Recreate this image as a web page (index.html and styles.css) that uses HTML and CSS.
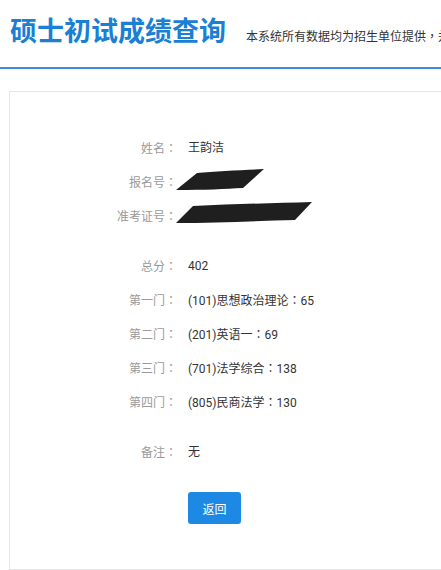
FILE: index.html
```html
<!DOCTYPE html>
<html lang="zh-CN">
<head>
<meta charset="utf-8">
<title>硕士初试成绩查询</title>
<link rel="stylesheet" href="styles.css">
</head>
<body>
<div class="page">
  <header class="header">
    <h1 class="title">硕士初试成绩查询</h1>
    <span class="subtitle">本系统所有数据均为招生单位提供<span class="colon" lang="zh-TW">，</span>并以招生单位公布的成绩为准。</span>
  </header>
  <main class="card">
    <section class="group">
      <div class="row"><span class="label">姓名<span class="colon" lang="zh-TW">：</span></span><span class="value">王韵洁</span></div>
      <div class="row"><span class="label">报名号<span class="colon" lang="zh-TW">：</span></span><span class="value value-redact">
        <svg class="redact redact-a" width="90" height="22" viewBox="0 0 90 22"><path d="M1 21 L22 4 C40 2 70 1 89 0 L68 19 C50 20 30 21 1 21 Z" fill="#1f1f1f"/></svg>
      </span></div>
      <div class="row"><span class="label">准考证号<span class="colon" lang="zh-TW">：</span></span><span class="value value-redact">
        <svg class="redact redact-b" width="138" height="22" viewBox="0 0 138 22"><path d="M1 21 L18 4 C60 2 100 1 137 0 L120 18 C80 19 40 21 1 21 Z" fill="#1f1f1f"/></svg>
      </span></div>
    </section>
    <section class="group">
      <div class="row"><span class="label">总分<span class="colon" lang="zh-TW">：</span></span><span class="value">402</span></div>
      <div class="row"><span class="label">第一门<span class="colon" lang="zh-TW">：</span></span><span class="value">(101)思想政治理论<span class="colon" lang="zh-TW">：</span>65</span></div>
      <div class="row"><span class="label">第二门<span class="colon" lang="zh-TW">：</span></span><span class="value">(201)英语一<span class="colon" lang="zh-TW">：</span>69</span></div>
      <div class="row"><span class="label">第三门<span class="colon" lang="zh-TW">：</span></span><span class="value">(701)法学综合<span class="colon" lang="zh-TW">：</span>138</span></div>
      <div class="row"><span class="label">第四门<span class="colon" lang="zh-TW">：</span></span><span class="value">(805)民商法学<span class="colon" lang="zh-TW">：</span>130</span></div>
    </section>
    <section class="group">
      <div class="row"><span class="label">备注<span class="colon" lang="zh-TW">：</span></span><span class="value">无</span></div>
    </section>
    <div class="actions">
      <button class="btn" type="button">返回</button>
    </div>
  </main>
</div>
</body>
</html>
```
FILE: styles.css
```css
html, body {
  margin: 0;
  padding: 0;
  background: #ffffff;
  overflow: hidden;
}
body {
  font-family: Roboto, "Noto Sans CJK SC", sans-serif;
  color: #333333;
}
.page {
  width: 1200px;
}
.header {
  display: flex;
  align-items: baseline;
  padding: 16px 0 23px 10px;
  border-bottom: 2px solid #3a8fd6;
}
.title {
  margin: 0;
  font-family: "Noto Sans CJK SC", sans-serif;
  font-size: 27px;
  line-height: 27px;
  font-weight: 700;
  color: #1b7fd4;
  white-space: nowrap;
}
.subtitle {
  margin-left: 20px;
  font-family: "Noto Sans CJK SC", sans-serif;
  font-size: 12px;
  color: #333333;
  white-space: nowrap;
}
.colon {
  font-family: "Noto Sans CJK TC", sans-serif;
}
.card {
  margin: 22px 0 0 9px;
  border: 1px solid #e6e6e6;
  padding: 39px 0 45px 0;
}
.group + .group {
  margin-top: 16px;
}
.row {
  display: flex;
  align-items: center;
  height: 34px;
  font-size: 12px;
}
.label {
  width: 167px;
  text-align: right;
  color: #9a9a9a;
  flex: none;
  line-height: 18px;
}
.value {
  display: block;
  margin-left: 11px;
  color: #333333;
  white-space: nowrap;
  line-height: 18px;
}
.value-redact {
  display: flex;
  align-items: center;
}
.redact {
  display: block;
  margin-left: -13px;
}
.redact-a {
  margin-top: -4px;
}
.redact-b {
  margin-top: -7px;
}
.actions {
  margin-top: 23px;
  padding-left: 178px;
}
.btn {
  width: 53px;
  height: 32px;
  border: none;
  border-radius: 3px;
  background: #1e88e5;
  color: #ffffff;
  font-family: "Noto Sans CJK SC", sans-serif;
  font-size: 12px;
  padding: 0;
}
```
